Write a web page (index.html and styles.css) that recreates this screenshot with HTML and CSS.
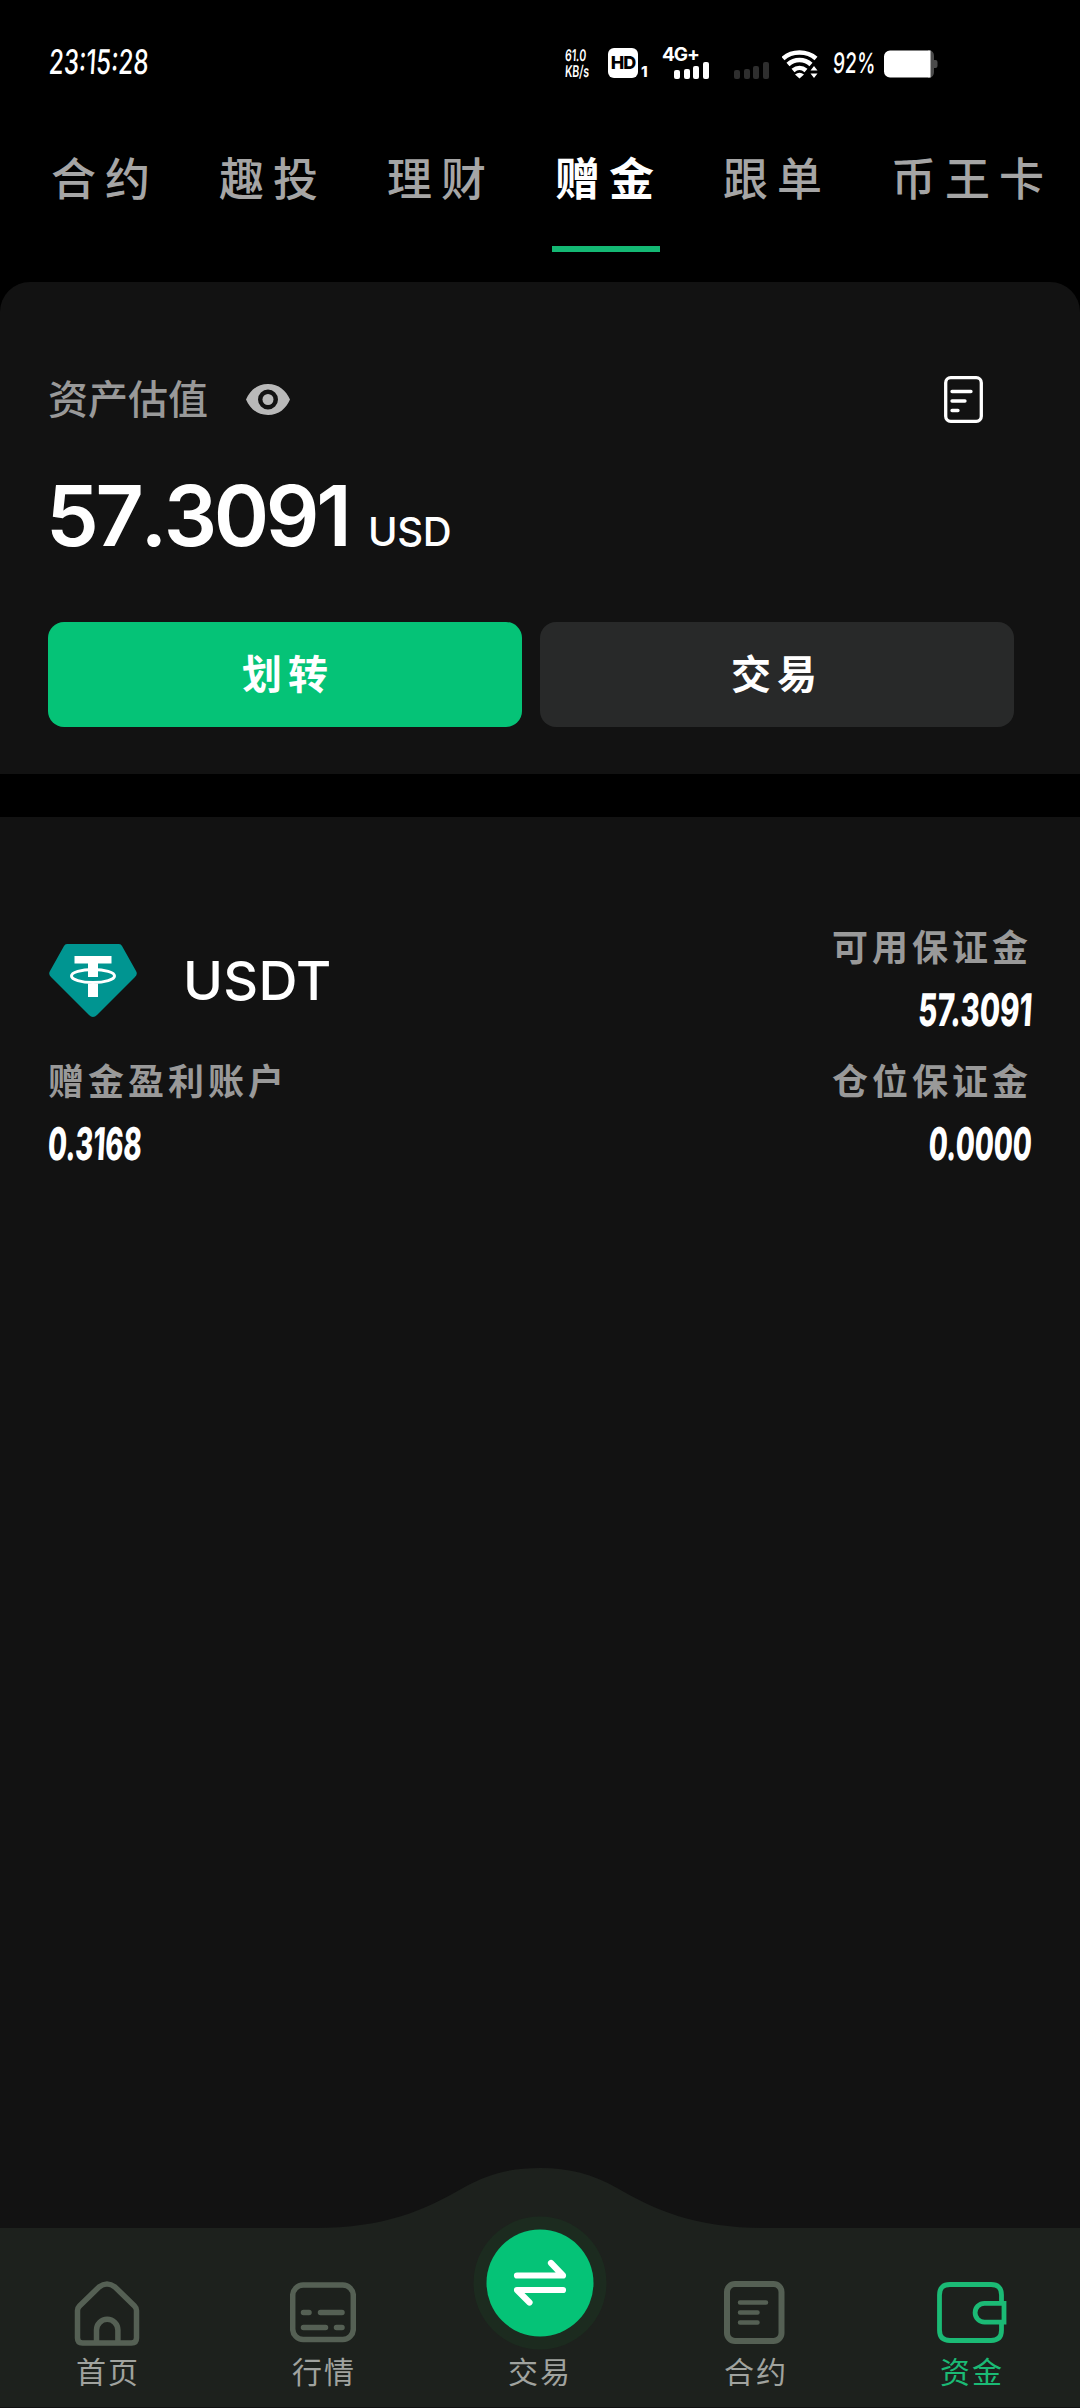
FILE: index.html
```html
<!DOCTYPE html>
<html lang="zh-CN">
<head>
<meta charset="utf-8">
<title>资金</title>
<link rel="stylesheet" href="styles.css">
</head>
<body>
<div class="app">
  <header class="status">
    <span class="time"><span class="narrow">23:15:28</span></span>
    <span class="speed"><span class="narrow">61.0</span><span class="narrow">KB/s</span></span>
    <span class="hd">HD</span><span class="sim">1</span>
    <span class="signal"><b>4G+</b>
      <svg width="36" height="17" viewBox="0 0 36 17" fill="#fff"><rect y="8" width="6" height="9" rx="2"/><rect x="10" y="7" width="6" height="10" rx="2"/><rect x="19" y="4" width="6" height="13" rx="2"/><rect x="29" y="0" width="6" height="17" rx="2"/></svg>
    </span>
    <svg class="signal-off" width="36" height="17" viewBox="0 0 36 17" fill="#2e2e2e"><rect y="8" width="6" height="9" rx="2"/><rect x="10" y="7" width="6" height="10" rx="2"/><rect x="19" y="4" width="6" height="13" rx="2"/><rect x="29" y="0" width="6" height="17" rx="2"/></svg>
    <svg class="wifi" width="37" height="29" viewBox="0 0 37 29"><g fill="none" stroke="#fff" stroke-width="4.500"><path d="M1 8.500C10 0.500 25 0.500 34 8.500"/><path d="M6 14.500C12.500 8.500 22.500 8.500 29 14.500"/><path d="M11 20.500C15 17 20 17 24 20.500"/></g><path d="M13 24.500Q17.500 21 22 24.500L17.500 28.500Z" fill="#fff"/><path d="M28.500 20.500L32 16L35.500 20.500ZM28.500 23.500H35.500L32 28Z" fill="#fff"/></svg>
    <span class="percent"><span class="narrow">92%</span></span>
    <svg class="battery" width="54" height="28" viewBox="0 0 54 28"><path d="M44 0h1a6 6 0 0 1 5 6v4h1.500a2 2 0 0 1 2 2v4a2 2 0 0 1-2 2H50v4a6 6 0 0 1-5 6h-1z" fill="#4a4a4a"/><path d="M6 0.500H46.500V27.500H6a6 6 0 0 1-6-6V6.500a6 6 0 0 1 6-6Z" fill="#fff"/></svg>
  </header>

  <nav class="tabs">
    <a>合约</a><a>趣投</a><a>理财</a><a class="active">赠金</a><a>跟单</a><a>币王卡</a>
  </nav>

  <section class="summary">
    <div class="summary-head">
      <span class="summary-label">资产估值</span>
      <svg class="eye" width="44" height="31" viewBox="0 0 44 31"><path fill="#b9b9b9" fill-rule="evenodd" d="M22 0C33 0 40 6.500 44 15.500C40 24.500 33 31 22 31S4 24.500 0 15.500C4 6.500 11 0 22 0ZM22 5.500a10 10 0 1 0 0 20a10 10 0 1 0 0-20Z"/><circle cx="22" cy="15.500" r="5.500" fill="#b9b9b9"/></svg>
      <svg class="records" width="39" height="47" viewBox="0 0 39 47" fill="none" stroke="#fff" stroke-width="3.300" stroke-linecap="round"><rect x="1.700" y="1.700" width="35.600" height="43.600" rx="5"/><path d="M8 15.500H27M8 25H21M8 34.500H14"/></svg>
    </div>
    <div class="amount"><span class="amount-value">57.3091</span><span class="amount-unit">USD</span></div>
    <div class="actions"><button class="primary">划转</button><button>交易</button></div>
  </section>

  <main class="assets">
    <div class="asset-row top">
      <div class="coin">
        <svg width="90" height="75" viewBox="0 0 90 75"><path d="M19 0H71Q73 0 74 2L88 27Q90 30 87 33L49 71Q45 75 41 71L3 33Q0 30 2 27L16 2Q17 0 19 0Z" fill="#009591"/><path d="M26.500 12H63.500V19.500H50V33H40V19.500H26.500ZM40 39.500H50V53H40Z" fill="#fff"/><ellipse cx="45" cy="32" rx="21.500" ry="6.500" fill="none" stroke="#fff" stroke-width="3"/></svg>
        <span>USDT</span>
      </div>
      <div class="field right"><span class="label">可用保证金</span><span class="value"><span class="narrow wide">57.3091</span></span></div>
    </div>
    <div class="asset-row">
      <div class="field"><span class="label">赠金盈利账户</span><span class="value"><span class="narrow">0.3168</span></span></div>
      <div class="field right"><span class="label">仓位保证金</span><span class="value"><span class="narrow">0.0000</span></span></div>
    </div>
  </main>

  <footer class="dock">
    <svg class="dock-shape" width="1080" height="240" viewBox="0 0 1080 240"><path d="M0 60H315C385 60 425 42 463 20C488 6 510 0 540 0S592 6 617 20C655 42 695 60 765 60H1080V239H0Z" fill="#1d211d"/></svg>
    <a class="item"><svg width="66" height="66" viewBox="0 0 66 66" fill="none" stroke="#556054" stroke-width="5.500"><path d="M3.500 29.500Q3.500 27 5.500 25L25 6Q33 0 41 6L60.500 25Q62.500 27 62.500 29.500V57Q62.500 62 57.500 62H8.500Q3.500 62 3.500 57ZM22.500 62V49a10.700 10.700 0 0 1 21.400 0V62"/></svg><span>首页</span></a>
    <a class="item"><svg width="66" height="66" viewBox="0 0 66 66" fill="none" stroke="#556054" stroke-width="5.500" stroke-linecap="round"><rect x="2.700" y="4" width="60.600" height="54.500" rx="10.500"/><path d="M13.500 31.500H19M30.500 31.500H52M13.500 46.500H35.500M46.500 46.500H52"/></svg><span>行情</span></a>
    <a class="item trade"><svg width="134" height="134" viewBox="0 0 134 134"><circle cx="67" cy="67" r="66.500" fill="#1c2b1f"/><circle cx="67" cy="67" r="53.500" fill="#05c377"/><path d="M44 59.500H90L78 47M90 74H44L56.500 86.500" fill="none" stroke="#fff" stroke-width="6.200" stroke-linecap="round" stroke-linejoin="round"/></svg><span>交易</span></a>
    <a class="item"><svg width="66" height="66" viewBox="0 0 66 66" fill="none" stroke="#556054" stroke-width="6" stroke-linecap="round"><rect x="5" y="3" width="54.500" height="57" rx="8"/><path stroke-width="4.500" d="M18 21.500H44M18 31.500H35.500M18 41.500H35.500"/></svg><span>合约</span></a>
    <a class="item active"><svg width="72" height="66" viewBox="0 0 72 66" fill="none" stroke="#1bba75" stroke-width="4.800"><path d="M66.500 22.500V14Q66.500 3.500 56 3.500H15Q4.500 3.500 4.500 14V49Q4.500 59.500 15 59.500H56Q66.500 59.500 66.500 49V41"/><path d="M69 22.300H49.500a9.400 9.400 0 0 0 0 18.800H69Z"/></svg><span>资金</span></a>
  </footer>
</div>
</body>
</html>
```
FILE: styles.css
```css
* { box-sizing: border-box; }
body { margin: 0; background: #000; }
.app { width: 1080px; height: 2408px; display: flex; flex-direction: column; overflow: hidden; background: #000; color: #fff; font-family: Inter, "Noto Sans CJK SC", sans-serif; }
.narrow { display: inline-block; transform-origin: 0 50%; white-space: nowrap; }

.status { height: 126px; display: flex; align-items: flex-start; padding-left: 49px; }
.time { width: 516px; margin-top: 42px; font-size: 34px; line-height: 40px; font-weight: 500; }
.time .narrow { transform: scaleX(.71) skewX(-5deg); }
.speed { width: 43px; margin-top: 47px; display: flex; flex-direction: column; align-items: flex-start; font-size: 16px; line-height: 16px; font-weight: 600; }
.speed .narrow { transform: scaleX(.66) skewX(-5deg); }
.hd { width: 30px; height: 30px; margin-top: 48px; border-radius: 6px; background: #fff; color: #000; font-size: 18px; line-height: 30px; font-weight: 800; text-align: center; letter-spacing: -1px; }
.sim { width: 24px; padding-left: 3px; margin-top: 62px; font-size: 15px; line-height: 19px; font-weight: 800; }
.signal { width: 72px; margin-top: 46px; display: flex; flex-direction: column; font-size: 19px; line-height: 17px; letter-spacing: -1px; }
.signal svg { margin: -1px 0 0 12px; }
.signal-off { margin-top: 62px; }
.wifi { margin: 50px 0 0 12px; }
.percent { width: 51px; margin: 46px 0 0 14px; font-size: 28px; line-height: 34px; font-weight: 500; }
.percent .narrow { transform: scaleX(.68) skewX(-5deg); }
.battery { margin-top: 50px; }

.tabs { height: 156px; padding: 0 0 30px 48px; display: flex; gap: 60px; flex: none; }
.tabs a { flex: none; width: 108px; padding-left: 3px; white-space: nowrap; font-size: 45px; line-height: 108px; letter-spacing: 9px; color: #a5a5a5; font-weight: 500; }
.tabs a:last-child { width: 162px; }
.tabs .active { color: #fff; font-weight: 700; border-bottom: 6px solid #14b874; }

.summary { height: 492px; padding: 94px 66px 0 48px; background: #121212; border-radius: 30px 30px 0 0; display: flex; flex-direction: column; flex: none; }
.summary-head { display: flex; align-items: center; height: 47px; }
.summary-label { font-size: 40px; line-height: 46px; font-weight: 500; color: #999; }
.eye { margin-left: 38px; }
.records { margin: 0 31px 0 auto; }
.amount { display: flex; align-items: baseline; height: 100px; margin: 43px 0 0 -2px; line-height: 100px; }
.amount-value { width: 322px; font-size: 84px; font-weight: 600; letter-spacing: -3.400px; font-kerning: none; }
.amount-unit { font-size: 40px; letter-spacing: -.300px; font-weight: 500; }
.actions { display: grid; grid-template-columns: 1fr 1fr; gap: 18px; margin-top: 56px; }
.actions button { height: 105px; padding: 0 0 5px; border: 0; border-radius: 16px; background: #282929; color: #fff; font: 600 40px "Noto Sans CJK SC", sans-serif; letter-spacing: 6px; }
.actions .primary { background: #05c377; padding-left: 6px; }

.assets { flex: 1; margin-top: 43px; padding: 107px 48px 0; background: #121212; }
.asset-row { display: flex; justify-content: space-between; height: 134px; }
.coin { display: flex; align-items: flex-start; font-size: 54px; line-height: 64px; font-weight: 500; letter-spacing: .300px; gap: 45px; padding-top: 24px; }
.coin svg { margin-top: -4px; }
.coin span { margin-top: 1px; }
.field { display: flex; flex-direction: column; }
.right { align-items: flex-end; }
.label { font-size: 36px; line-height: 48px; letter-spacing: 4px; color: #999; font-weight: 700; }
.value { margin-top: 13px; font-size: 45px; line-height: 50px; font-weight: 800; }
.value .narrow { transform: scaleX(.61) skewX(-5deg); }
.value .wide { transform: scaleX(.65) skewX(-5deg); }
.right .narrow { transform-origin: 100% 50%; }

.dock { position: relative; height: 240px; flex: none; display: grid; grid-template-columns: repeat(5, 1fr); background: #121212; }
.dock-shape { position: absolute; left: 0; top: 0; }
.item { position: relative; display: flex; flex-direction: column; align-items: center; padding-top: 113px; font-size: 30px; line-height: 40px; letter-spacing: 2px; color: #a0a39f; }
.item > svg { margin-left: -2px; }
.item span { margin-top: 5px; }
.trade { padding-top: 48px; }
.trade > svg { margin-left: 0; }
.trade span { margin-top: 2px; }
.dock .active { color: #1bba75; }
```
